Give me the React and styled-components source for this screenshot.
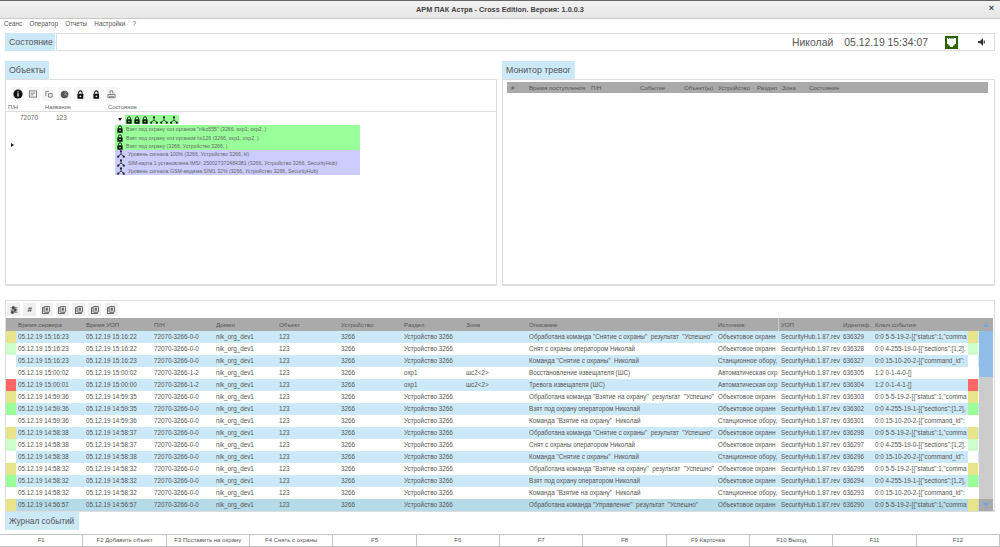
import React from "react";
import styled, { createGlobalStyle } from "styled-components";

const Global = createGlobalStyle`
  html, body { margin: 0; padding: 0; background: #fff; }
  body { font-family: "Liberation Sans", Arial, sans-serif; color: #555; overflow: hidden; }
`;
const Page = styled.div`width: 1000px; height: 547px; display: flex; flex-direction: column; overflow: hidden; background: #fff;`;
const TitleBar = styled.header`
  height: 19px; box-sizing: border-box; flex: none; display: flex; align-items: center; justify-content: center; position: relative;
  background: linear-gradient(#f2f2f2, #e6e6e6); border-top: 1px solid #666; border-bottom: 1px solid #c9c9c9;
  font-size: 7.3px; font-weight: bold; color: #444;
`;
const Close = styled.span`position: absolute; right: 6px; top: 2px; font-size: 9px; color: #444; font-weight: bold;`;
const Menu = styled.nav`height: 14px; flex: none; display: flex; gap: 7.3px; padding: 1px 0 0 4px; box-sizing: border-box; font-size: 6.3px; line-height: 8px; color: #555;`;
const StatusRow = styled.section`height: 18px; flex: none; margin: 0 5px; display: flex; gap: 1px;`;
const StatusLabel = styled.div`width: 50px; background: #cce9f7; font-size: 8.8px; line-height: 18px; padding-left: 4px; box-sizing: border-box; color: #555;`;
const StatusField = styled.div`
  flex: 1; border: 1px solid #ddd; display: flex; align-items: center; justify-content: flex-end; font-size: 10.4px; color: #555;
`;
const UserName = styled.span`margin-right: 11px;`;
const Clock = styled.span`margin-right: 17px;`;
const PortIcon = styled.svg`width: 13px; height: 13px; margin-right: 20px;`;
const SpeakerIcon = styled.svg`width: 7px; height: 8px; margin-right: 9px;`;
const Panes = styled.section`height: 225px; flex: none; margin: 10px 5px 0; display: grid; grid-template-columns: 492px 493px; gap: 5px;`;
const Pane = styled.div`display: flex; flex-direction: column; min-width: 0;`;
const Tab = styled.div`align-self: flex-start; height: 18px; flex: none; background: #cce9f7; font-size: 8.8px; line-height: 18px; padding: 0 4px; color: #555;`;
const PaneBody = styled.div`flex: 1; border: 1px solid #ddd; border-width: 1px 1px 2px 1px; position: relative; min-height: 0;`;
const Tools = styled.div`display: flex; gap: 2.7px; padding: 7px 0 0 5px; height: 14px;`;
const Tool = styled.span`width: 13px; height: 14px; background: #f6f6f6; display: flex; align-items: center; justify-content: center;`;
const TreeHead = styled.div`
  display: grid; grid-template-columns: 37px 63px 1fr; padding: 2px 0 0 2px; height: 8px; box-sizing: content-box;
  border-bottom: 1px solid #ddd; font-size: 5.8px; line-height: 8px; color: #666;
`;
const TreeGrid = styled.div`display: grid; grid-template-columns: 109px 1fr; padding-top: 2px;`;
const TreeInfo = styled.div`display: grid; grid-template-columns: 36px 1fr; padding: 0 0 0 14px; font-size: 6.5px; line-height: 8px; color: #666;`;
const TreeState = styled.div`width: 245px;`;
const TreeTop = styled.div`height: 11px; display: flex; align-items: center;`;
const Caret = styled.span`width: 0; height: 0; margin: 0 3px 0 3px; border: 2px solid transparent; border-top: 3px solid #111; border-bottom: 0;`;
const IconStrip = styled.span`display: flex; align-items: center; height: 9px; padding: 0 1px; gap: 2px; background: #99ff99;`;
const Pointer = styled.span`
  position: absolute; left: 5px; top: 63px; width: 0; height: 0;
  border-left: 3px solid #111; border-top: 2px solid transparent; border-bottom: 2px solid transparent;
`;
const EventLine = styled.div`
  height: 8.35px; display: flex; align-items: center; gap: 3px; padding-left: 2px; background: ${p => p.$tone};
  font-size: 5.2px; color: #666; white-space: nowrap; overflow: hidden;
`;
const AlarmHead = styled.div`
  margin: 2px 6px 0 4px; height: 11px; background: #aaa; display: grid; font-size: 6.1px; line-height: 11px; color: #555;
  grid-template-columns: 18px 62px 49px 44px 34px 39px 25px 27px 1fr; padding-left: 4px;
`;
const Journal = styled.section`
  height: 212px; flex: none; margin: 14px 5px 0; border: 1px solid #ddd; border-width: 1px 1px 2px 1px; display: flex; flex-direction: column; box-sizing: border-box;
`;
const JournalTools = styled.div`display: flex; gap: 3.3px; height: 17px; padding: 2px 0 0 1px; box-sizing: border-box;`;
const JTool = styled.span`width: 13px; height: 13px; background: #efefef; display: flex; align-items: center; justify-content: center; font-size: 8px; font-weight: bold; color: #444;`;
const TableWrap = styled.div`display: grid; grid-template-columns: 973px 14px; flex: 1; min-height: 0;`;
const cols = "10px 68px 68px 62px 63px 62px 63px 62px 63px 189px 63px 62px 32px 95px 10px";
const Row = styled.div`
  display: grid; grid-template-columns: ${cols}; height: 12px; font-size: 6.3px; line-height: 12px; color: #555;
  background: ${p => p.$bg};
`;
const HeadRow = styled(Row)`height: 13px; line-height: 13px; background: #aaa; color: #555; font-size: 6.2px;`;
const Cell = styled.div`padding-left: 2px; overflow: hidden; white-space: pre;`;
const HeadCell = styled(Cell)`border-left: ${p => (p.$divided ? "1px solid #ccc" : "0")}; margin-left: ${p => (p.$divided ? "-1px" : "0")};`;
const Swatch = styled.div`background: ${p => p.$c};`;
const Scroll = styled.div`display: flex; flex-direction: column; background: #ccc;`;
const ScrollBtn = styled.div`height: ${p => p.$h}px; flex: none; background: #aaa; display: flex; align-items: center; justify-content: center;`;
const Thumb = styled.div`height: 46px; flex: none; background: #90bce8;`;
const Gutter = styled.div`flex: 1;`;
const Tri = styled.span`
  width: 0; height: 0; border: 3px solid transparent;
  ${p => (p.$up ? "border-bottom: 4px solid #6aa8e6; border-top: 0;" : "border-top: 4px solid #6aa8e6; border-bottom: 0;")}
`;
const BottomTab = styled.div`height: 18px; flex: none; width: 74px; margin-left: 5px; background: #cce9f7; font-size: 8.3px; line-height: 18px; padding-left: 4px; box-sizing: border-box; color: #555;`;
const Keys = styled.footer`height: 13px; margin-top: 4px; flex: none; display: grid; grid-template-columns: repeat(12, 1fr); border-top: 1px solid #c4c4c4; box-sizing: border-box;`;
const Key = styled.div`border-right: 1px solid #c4c4c4; border-bottom: 1px solid #c4c4c4; text-align: center; font-size: 6px; line-height: 11px; color: #555; white-space: nowrap;`;

const Lock = ({ s = 8, hole = "#99ff99" }) => (
  <svg width={s * 0.75} height={s} viewBox="0 0 8 10.6">
    <path d="M2 4.5V3a2 2 0 0 1 4 0v1.5" fill="none" stroke="#111" strokeWidth="1.2" />
    <rect x="0.5" y="4.4" width="7" height="6" rx="0.6" fill="#111" />
    <circle cx="4" cy="7.4" r="1" fill={hole} />
  </svg>
);
const Net = ({ s = 8 }) => (
  <svg width={s} height={s} viewBox="0 0 10 10">
    <path d="M5 2V5L1.5 8M5 5l3.5 3" fill="none" stroke="#222" strokeWidth="1" />
    <circle cx="5" cy="1.6" r="1.4" fill="#222" />
    <circle cx="1.5" cy="8.4" r="1.4" fill="#222" />
    <circle cx="8.5" cy="8.4" r="1.4" fill="#222" />
  </svg>
);
const Info = () => (
  <svg width="10" height="10" viewBox="0 0 10 10">
    <circle cx="5" cy="5" r="4.6" fill="#111" />
    <rect x="4.4" y="4.2" width="1.2" height="3.4" fill="#fff" />
    <rect x="4.4" y="2.3" width="1.2" height="1.2" fill="#fff" />
  </svg>
);
const WindowIcon = () => (
  <svg width="8" height="8" viewBox="0 0 9 9" fill="none" stroke="#777">
    <rect x="0.5" y="1" width="8" height="7" />
    <path d="M2 3.5h5M2 5.5h3" />
  </svg>
);
const Folders = () => (
  <svg width="8" height="8" viewBox="0 0 9 9" fill="none" stroke="#666" strokeWidth="0.9">
    <path d="M1 7V1.5h3.5M4 4h4v4H4z" />
  </svg>
);
const Globe = () => (
  <svg width="9" height="9" viewBox="0 0 10 10">
    <circle cx="5" cy="5" r="4.2" fill="#555" />
    <path d="M5 1l2 2-2 2 3 1" fill="none" stroke="#bbb" strokeWidth="0.8" />
  </svg>
);
const Printer = () => (
  <svg width="9" height="9" viewBox="0 0 10 10" fill="none" stroke="#666" strokeWidth="0.9">
    <path d="M3.5 4V1h3v3M1 5h8v3.5H1zM3 8.5V7h4v1.5" />
  </svg>
);
const Pages = () => (
  <svg width="8" height="8" viewBox="0 0 9 9">
    <rect x="0.5" y="2" width="6.5" height="6.5" fill="none" stroke="#555" />
    <rect x="2.3" y="0.5" width="6.2" height="6.5" rx="0.8" fill="#ddd" stroke="#555" />
    <rect x="4.2" y="2" width="2.4" height="3.2" fill="#666" />
  </svg>
);
const Sliders = () => (
  <svg width="8" height="8" viewBox="0 0 9 9" stroke="#444" fill="#444">
    <path d="M0.5 2h8M0.5 4.5h8M0.5 7h8" strokeWidth="0.8" />
    <rect x="3" y="0.8" width="1.6" height="2.4" />
    <rect x="5" y="3.3" width="1.6" height="2.4" />
    <rect x="2" y="5.8" width="1.6" height="2.4" />
  </svg>
);

const B = "Обработана команда ";
const res = '  результат  "Успешно"';
const OH = "Объектовое охранн";
const ST = "Станционное обору,";
const AU = "Автоматическая охр";
const D = "Устройство 3266";
const K1 = '0:0 5-5-19-2-[{"status":1,"comma';
const K2 = '0:0 4-255-19-0-[{"sections":[1,2],';
const K3 = '0:0 15-10-20-2-[{"command_id":';
const K4 = '0:0 4-255-19-1-[{"sections":[1,2],';
const Y = "#e8e48c", P = "#ccffcc", W = "#ffffff", R = "#ff6666", G = "#99ff99";
const SN = "72070-3266-0-0";
const data = [
  [Y, "15:16:23", "15:16:22", SN, D, "", B + '"Снятие с охраны"' + res, OH, "636329", K1],
  [P, "15:16:23", "15:16:22", SN, D, "", "Снят с охраны оператором Николай", OH, "636328", K2],
  [W, "15:16:23", "15:16:23", SN, D, "", 'Команда "Снятие с охраны"  Николай', ST, "636327", K3],
  [W, "15:00:02", "15:00:02", "72070-3266-1-2", "охр1", "шс2<2>", "Восстановление извещателя (ШС)", AU, "636305", "1:2 0-1-4-0-[]"],
  [R, "15:00:01", "15:00:00", "72070-3266-1-2", "охр1", "шс2<2>", "Тревога извещателя (ШС)", AU, "636304", "1:2 0-1-4-1-[]"],
  [Y, "14:59:36", "14:59:35", SN, D, "", B + '"Взятие на охрану"' + res, OH, "636303", K1],
  [G, "14:59:36", "14:59:35", SN, D, "", "Взят под охрану оператором Николай", OH, "636302", K4],
  [W, "14:59:36", "14:59:36", SN, D, "", 'Команда "Взятие на охрану"  Николай', ST, "636301", K3],
  [Y, "14:58:38", "14:58:37", SN, D, "", B + '"Снятие с охраны"' + res, OH, "636298", K1],
  [P, "14:58:38", "14:58:37", SN, D, "", "Снят с охраны оператором Николай", OH, "636297", K2],
  [W, "14:58:38", "14:58:38", SN, D, "", 'Команда "Снятие с охраны"  Николай', ST, "636296", K3],
  [Y, "14:58:32", "14:58:32", SN, D, "", B + '"Взятие на охрану"' + res, OH, "636295", K1],
  [G, "14:58:32", "14:58:32", SN, D, "", "Взят под охрану оператором Николай", OH, "636294", K4],
  [W, "14:58:32", "14:58:32", SN, D, "", 'Команда "Взятие на охрану"  Николай', ST, "636293", K3],
  [Y, "14:56:57", "14:56:57", SN, D, "", B + '"Управление"' + res, OH, "636290", K1],
];
const heads = ["Время сервера", "Время УОП", "П/Н", "Домен", "Объект", "Устройство", "Раздел", "Зона", "Описание", "Источник", "УОП", "Идентиф", "Ключ события"];
const menu = ["Сеанс", "Оператор", "Отчеты", "Настройки", "?"];
const alarm = ["#", "Время поступления", "П/Н", "Событие", "Объект(ы)", "Устройство", "Раздел", "Зона", "Состояние"];
const lines = [
  ['Взят под охрану хоз органом "niko555" (3266, охр1, охр2, )', "#99ff99", Lock],
  ["Взят под охрану хоз органом №126 (3266, охр1, охр2, )", "#99ff99", Lock],
  ["Взят под охрану (3266, Устройство 3266, )", "#99ff99", Lock],
  ["Уровень сигнала 100% (3266, Устройство 3266, kl)", "#ccccff", Net],
  ["SIM-карта 1 установлена IMSI: 250027372484381 (3266, Устройство 3266, SecurityHub)", "#ccccff", Net],
  ["Уровень сигнала GSM-модема SIM1 32% (3266, Устройство 3266, SecurityHub)", "#ccccff", Net],
];
const keys = ["F1", "F2 Добавить объект", "F3 Поставить на охрану", "F4 Снять с охраны", "F5", "F6", "F7", "F8", "F9 Карточка", "F10 Выход", "F11", "F12"];

export default function App() {
  return (
    <Page>
      <Global />
      <TitleBar>АРМ ПАК Астра - Cross Edition. Версия: 1.0.0.3<Close>×</Close></TitleBar>
      <Menu>{menu.map(m => <span key={m}>{m}</span>)}</Menu>
      <StatusRow>
        <StatusLabel>Состояние</StatusLabel>
        <StatusField>
          <UserName>Николай</UserName>
          <Clock>05.12.19 15:34:07</Clock>
          <PortIcon viewBox="0 0 13 13">
            <rect width="13" height="13" fill="#2a6400" />
            <path d="M2 2h1.2v1h1V2h1.2v1h1V2h1.2v1h1V2H11v6H9.5v1.5H8V11H5V9.5H3.5V8H2z" fill="#fff" />
          </PortIcon>
          <SpeakerIcon viewBox="0 0 7 8">
            <path d="M0 3h2L5 0v8L2 5H0z" fill="#333" /><rect x="5.6" y="2.5" width="1.2" height="3" fill="#333" />
          </SpeakerIcon>
        </StatusField>
      </StatusRow>
      <Panes>
        <Pane>
          <Tab>Объекты</Tab>
          <PaneBody>
            <Tools>
              <Tool><Info /></Tool><Tool><WindowIcon /></Tool><Tool><Folders /></Tool><Tool><Globe /></Tool>
              <Tool><Lock s={9} hole="#f6f6f6" /></Tool><Tool><Lock s={9} hole="#f6f6f6" /></Tool><Tool><Printer /></Tool>
            </Tools>
            <TreeHead><span>П/Н</span><span>Название</span><span>Состояние</span></TreeHead>
            <TreeGrid>
              <TreeInfo><span>72070</span><span>123</span></TreeInfo>
              <TreeState>
                <TreeTop>
                  <Caret />
                  <IconStrip><Lock /><Lock /><Lock /><Net /><Net /><Net /></IconStrip>
                </TreeTop>
                {lines.map(([t, c, I]) => <EventLine key={t} $tone={c}><I s={8} hole={c} /><span>{t}</span></EventLine>)}
              </TreeState>
            </TreeGrid>
            <Pointer />
          </PaneBody>
        </Pane>
        <Pane>
          <Tab>Монитор тревог</Tab>
          <PaneBody>
            <AlarmHead>{alarm.map(a => <span key={a}>{a}</span>)}</AlarmHead>
          </PaneBody>
        </Pane>
      </Panes>
      <Journal>
        <JournalTools>
          <JTool><Sliders /></JTool><JTool>#</JTool>
          <JTool><Pages /></JTool><JTool><Pages /></JTool><JTool><Pages /></JTool><JTool><Pages /></JTool><JTool><Pages /></JTool>
        </JournalTools>
        <TableWrap>
          <div>
            <HeadRow>
              <span />
              {heads.map(h => <HeadCell key={h} $divided={h === "УОП"}>{h}</HeadCell>)}
              <span /><span />
            </HeadRow>
            {data.map((r, i) => {
              const [sw, t1, t2, sn, sec, zone, desc, src, id, key] = r;
              const bg = i === 14 ? "#b5dbe8" : i % 2 === 0 ? "#cce9f7" : "#fff";
              return (
                <Row key={id} $bg={bg}>
                  <Swatch $c={sw} />
                  <Cell>05.12.19 {t1}</Cell>
                  <Cell>05.12.19 {t2}</Cell>
                  <Cell>{sn}</Cell>
                  <Cell>nik_org_dev1</Cell>
                  <Cell>123</Cell>
                  <Cell>3266</Cell>
                  <Cell>{sec}</Cell>
                  <Cell>{zone}</Cell>
                  <Cell>{desc}</Cell>
                  <Cell>{src}</Cell>
                  <Cell>SecurityHub.1.87.rev</Cell>
                  <Cell>{id}</Cell>
                  <Cell>{key}</Cell>
                  <Swatch $c={sw} />
                </Row>
              );
            })}
          </div>
          <Scroll>
            <ScrollBtn $h={13}><Tri $up /></ScrollBtn>
            <Thumb />
            <Gutter />
            <ScrollBtn $h={12}><Tri /></ScrollBtn>
          </Scroll>
        </TableWrap>
      </Journal>
      <BottomTab>Журнал событий</BottomTab>
      <Keys>{keys.map(k => <Key key={k}>{k}</Key>)}</Keys>
    </Page>
  );
}
